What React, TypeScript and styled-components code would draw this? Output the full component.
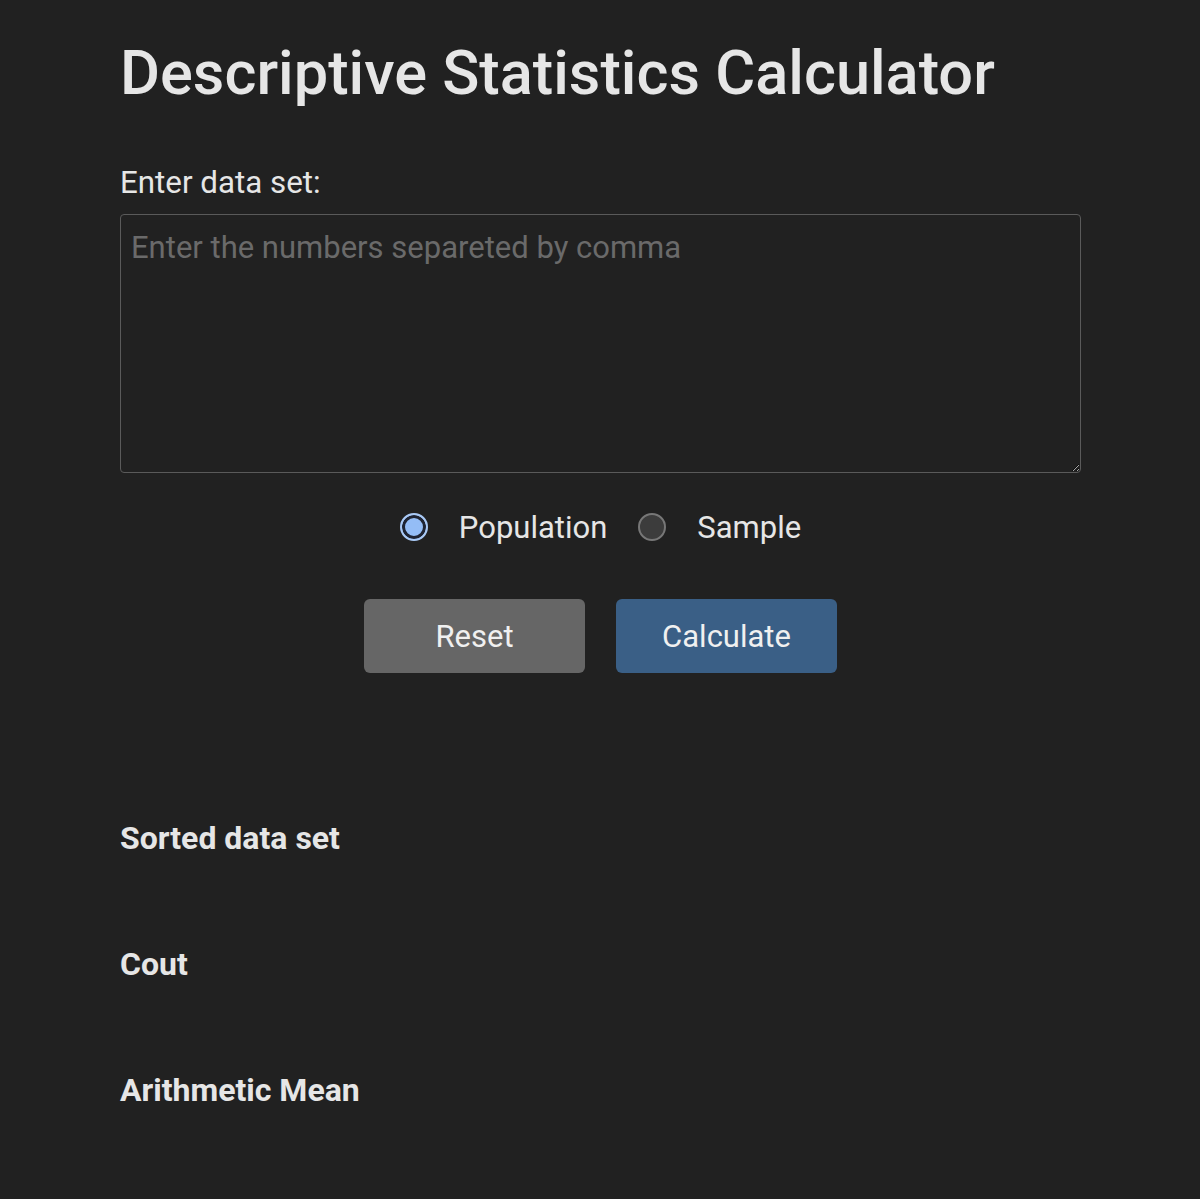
import React, { useState } from "react";
import styled, { createGlobalStyle } from "styled-components";

const Global = createGlobalStyle`
  html, body { margin: 0; padding: 0; background: #212121; }
  body { font-family: Roboto, "Liberation Sans", sans-serif; color: #e8e8e8; }
  * { box-sizing: border-box; }
`;

const Page = styled.div`
  width: 961px;
  margin-left: 120px;
  padding-top: 38px;
  padding-bottom: 60px;
`;

const Title = styled.h1`
  margin: 0;
  font-size: 61.3px;
  font-weight: 500;
  line-height: 71px;
  color: #e6e6e6;
`;

const Label = styled.label`
  display: block;
  margin-top: 56px;
  font-size: 31.3px;
  line-height: 36px;
  color: #e6e6e6;
`;

const Area = styled.textarea`
  display: block;
  width: 100%;
  height: 259px;
  margin-top: 13px;
  padding: 15px 10px;
  background: #212121;
  border: 1px solid #5a5a5a;
  border-radius: 4px;
  color: #e6e6e6;
  font-family: Roboto, "Liberation Sans", sans-serif;
  font-size: 31px;
  line-height: 36px;
  resize: vertical;
  outline: none;
  &::placeholder { color: #6a6a6a; }
`;

const RadioRow = styled.div`
  display: flex;
  justify-content: center;
  align-items: center;
  margin-top: 36px;
  height: 36px;
`;

const RadioItem = styled.label`
  display: flex;
  align-items: center;
  font-size: 31px;
  color: #e6e6e6;
  cursor: pointer;
  & + & { margin-left: 31px; }
`;

const Dot = styled.span<{ $on: boolean }>`
  width: 28px;
  height: 28px;
  border-radius: 50%;
  margin-right: 31px;
  border: 2px solid ${(p) => (p.$on ? "#a9c9f5" : "#777")};
  background: ${(p) => (p.$on ? "#94bdf6" : "#3c3c3c")};
  box-shadow: ${(p) => (p.$on ? "inset 0 0 0 3px #1e2433" : "none")};
`;

const Buttons = styled.div`
  display: flex;
  justify-content: center;
  gap: 31px;
  margin-top: 54px;
`;

const Btn = styled.button<{ $primary?: boolean }>`
  width: 221px;
  height: 74px;
  border: none;
  border-radius: 6px;
  background: ${(p) => (p.$primary ? "#3a5f86" : "#666666")};
  color: #f0f0f0;
  font-family: Roboto, "Liberation Sans", sans-serif;
  font-size: 31px;
  cursor: pointer;
`;

const Results = styled.div`
  margin-top: 147px;
  display: flex;
  flex-direction: column;
  gap: 89px;
`;

const Heading = styled.h3`
  margin: 0;
  font-size: 32px;
  font-weight: 700;
  line-height: 37px;
  color: #e6e6e6;
`;

export default function App() {
  const [mode, setMode] = useState("population");
  return (
    <>
      <Global />
      <Page>
        <Title>Descriptive Statistics Calculator</Title>
        <Label>Enter data set:</Label>
        <Area placeholder="Enter the numbers separeted by comma" />
        <RadioRow>
          <RadioItem onClick={() => setMode("population")}>
            <Dot $on={mode === "population"} />
            Population
          </RadioItem>
          <RadioItem onClick={() => setMode("sample")}>
            <Dot $on={mode === "sample"} />
            Sample
          </RadioItem>
        </RadioRow>
        <Buttons>
          <Btn>Reset</Btn>
          <Btn $primary>Calculate</Btn>
        </Buttons>
        <Results>
          <Heading>Sorted data set</Heading>
          <Heading>Cout</Heading>
          <Heading>Arithmetic Mean</Heading>
        </Results>
      </Page>
    </>
  );
}
